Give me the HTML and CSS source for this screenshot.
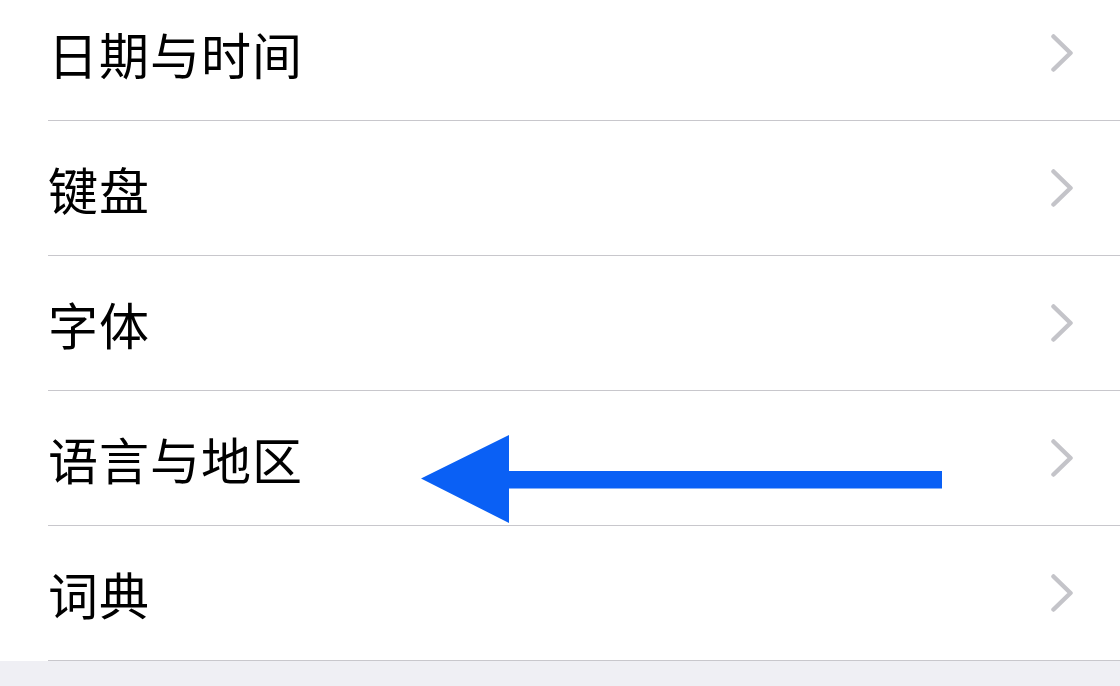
FILE: index.html
```html
<!DOCTYPE html>
<html lang="zh-CN">
<head>
  <meta charset="UTF-8" />
  <meta name="viewport" content="width=device-width, initial-scale=1" />
  <title>通用</title>
  <link rel="stylesheet" href="styles.css">
</head>
<body>

  <ul class="settings-list">
    <li class="row">
      <div class="row-inner">
        <span class="row-title">日期与时间</span>
        <svg class="chevron" viewBox="0 0 22 38"><polyline points="2.5,2.5 19.5,19 2.5,35.5" /></svg>
      </div>
    </li>
    <li class="row">
      <div class="row-inner">
        <span class="row-title">键盘</span>
        <svg class="chevron" viewBox="0 0 22 38"><polyline points="2.5,2.5 19.5,19 2.5,35.5" /></svg>
      </div>
    </li>
    <li class="row">
      <div class="row-inner">
        <span class="row-title">字体</span>
        <svg class="chevron" viewBox="0 0 22 38"><polyline points="2.5,2.5 19.5,19 2.5,35.5" /></svg>
      </div>
    </li>
    <li class="row">
      <div class="row-inner">
        <span class="row-title">语言与地区</span>
        <svg class="chevron" viewBox="0 0 22 38"><polyline points="2.5,2.5 19.5,19 2.5,35.5" /></svg>
      </div>
      <!-- annotation arrow -->
      <svg class="pointer-arrow" viewBox="0 0 523 90">
        <polygon points="1,44.5 89,1 89,37 522,37 522,54.5 89,54.5 89,89" />
      </svg>
    </li>
    <li class="row">
      <div class="row-inner">
        <span class="row-title">词典</span>
        <svg class="chevron" viewBox="0 0 22 38"><polyline points="2.5,2.5 19.5,19 2.5,35.5" /></svg>
      </div>
    </li>
  </ul>

  <div class="group-gap"></div>

</body>
</html>
```

FILE: styles.css
```css
:root {
  --background: #ffffff;
  --group-bg: #efeff4;
  --separator: #c8c7cc;
  --chevron: #c4c4c9;
  --text: #000000;
  --arrow: #0a60f5;
}
html, body {
  height: 100%;
}
body {
  margin: 0;
  background: var(--group-bg);
  font-family: "Noto Sans CJK SC", "Noto Sans", sans-serif;
  color: var(--text);
  overflow: hidden;
  display: flex;
  flex-direction: column;
}
.settings-list {
  list-style: none;
  margin: -14px 0 0 0;
  padding: 0;
  background: var(--background);
}
.row {
  position: relative;
}
.row-inner {
  height: 134px;
  margin-left: 48px;
  padding-right: 47px;
  border-bottom: 1px solid var(--separator);
  display: flex;
  align-items: center;
  justify-content: space-between;
}
.row-title {
  font-size: 50px;
  line-height: 1;
  letter-spacing: 1px;
}
.chevron {
  width: 22px;
  height: 38px;
  fill: none;
  stroke: var(--chevron);
  stroke-width: 4.5;
  stroke-linecap: round;
  stroke-linejoin: round;
}
/* Arrow drawn over the row */
.pointer-arrow {
  position: absolute;
  left: 420px;
  top: 43px;
  width: 523px;
  height: 90px;
  fill: var(--arrow);
}
.group-gap {
  flex: 1;
  background: var(--group-bg);
}
```
